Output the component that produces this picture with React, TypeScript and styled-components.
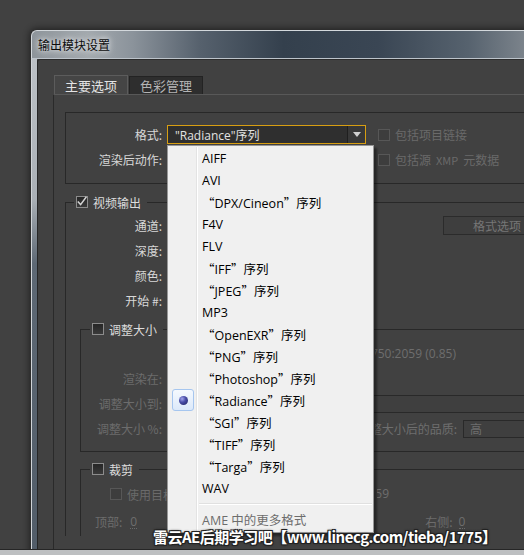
import React from "react";
import styled, { createGlobalStyle } from "styled-components";

const GlobalStyle = createGlobalStyle`
  html, body { margin: 0; padding: 0; background: #414141; }
  body { overflow: hidden; }
  * { box-sizing: border-box; }
`;

const LATIN = `"Open Sans", "Noto Sans CJK SC", sans-serif`;
const CJK = `"Noto Sans CJK SC", sans-serif`;

const Screen = styled.div`
  position: relative;
  width: 524px;
  height: 555px;
  overflow: hidden;
  display: flex;
  flex-direction: column;
  background: #414141;
  font-family: ${LATIN};
  font-size: 12px;
`;

const Desktop = styled.div`
  flex: 1;
  min-height: 0;
  overflow: hidden;
  padding: 30px 0 0 31px;
`;

const Taskbar = styled.div`
  height: 6px;
  flex-shrink: 0;
  border-top: 1px solid #262626;
  background: #bdbfc1;
`;

const Window = styled.div`
  width: 560px;
  height: 560px;
  display: flex;
  flex-direction: column;
  border-top-left-radius: 6px;
  box-shadow: 0 0 6px 2px rgba(0, 0, 0, 0.45);
`;

const TitleBar = styled.div`
  height: 29px;
  flex-shrink: 0;
  display: flex;
  align-items: center;
  padding: 0 0 1px 6px;
  border: 1px solid #d3d8dc;
  border-right: none;
  border-bottom-color: #bcc3ca;
  border-top-left-radius: 6px;
  background: linear-gradient(
    90deg,
    #8d949a 0%,
    #a3a9ae 10%,
    #8b939b 18%,
    #56616d 30%,
    #34404d 45%,
    #3a4654 62%,
    #56626e 78%,
    #7b838b 88%,
    #8c9399 100%
  );
`;

const Title = styled.span`
  font-family: ${CJK};
  font-size: 12px;
  color: #0c0c0c;
  text-shadow: 0 0 5px rgba(255, 255, 255, 0.9), 0 0 10px rgba(255, 255, 255, 0.6);
`;

const WindowBody = styled.div`
  flex: 1;
  min-height: 0;
  display: flex;
`;

const SideFrame = styled.div`
  width: 6px;
  flex-shrink: 0;
  border-left: 1px solid #d0d4d8;
  background: linear-gradient(180deg, #bcc1c6 0, #aab0b6 140px, #5d6874 205px, #505b67 100%);
`;

const Client = styled.div`
  flex: 1;
  display: flex;
  flex-direction: column;
  background: #414141;
  border-left: 1px solid #262626;
  border-top: 1px solid #2c2c2c;
  border-top-left-radius: 3px;
  padding: 15px 0 0 15px;
`;

const TabStrip = styled.div`
  display: flex;
  align-items: flex-end;
  height: 19px;
  padding-left: 1px;
`;

const Tab = styled.div<{ $active?: boolean }>`
  width: 74px;
  height: ${(p) => (p.$active ? 19 : 18)}px;
  margin-left: ${(p) => (p.$active ? 0 : 1)}px;
  display: flex;
  align-items: center;
  justify-content: center;
  font-family: ${CJK};
  font-size: 13px;
  color: ${(p) => (p.$active ? "#e4e4e4" : "#b4b4b4")};
  background: ${(p) => (p.$active ? "#454545" : "#2e2e2e")};
  border: 1px solid ${(p) => (p.$active ? "#5c5c5c" : "#232323")};
  border-bottom: none;
`;

const TabPanel = styled.div`
  flex: 1;
  border-top: 1px solid #585858;
  border-left: 1px solid #2a2a2a;
  padding: 17px 0 0 11px;
`;

const FormatBox = styled.div`
  border: 1px solid #282828;
  border-right: none;
  padding: 9px 0 11px;
  display: grid;
  grid-template-columns: 96px 199px auto;
  grid-auto-rows: 25px;
  column-gap: 5px;
  align-items: center;
`;

const Label = styled.span<{ $dim?: boolean; $w?: number }>`
  display: inline-block;
  flex-shrink: 0;
  width: ${(p) => (p.$w ? `${p.$w}px` : "auto")};
  line-height: 14px;
  text-align: right;
  white-space: nowrap;
  font-family: ${CJK};
  font-size: 12px;
  color: ${(p) => (p.$dim ? "#6c6c6c" : "#d8d8d8")};
`;

const Select = styled.div<{ $focus?: boolean }>`
  height: 19px;
  display: flex;
  align-items: stretch;
  border: 1px solid ${(p) => (p.$focus ? "#d79e12" : "#2a2a2a")};
  background: #2f2f2f;
`;

const SelectText = styled.span`
  flex: 1;
  display: flex;
  align-items: center;
  padding-left: 7px;
  color: #e2e2e2;
  font-family: ${LATIN};
  font-size: 12px;
  white-space: nowrap;
`;

const SelectArrow = styled.span`
  width: 18px;
  margin-left: auto;
  display: flex;
  align-items: center;
  justify-content: center;
  border-left: 1px solid #1f1f1f;
  background: #383838;
`;

const CheckOption = styled.label<{ $dim?: boolean; $ml?: number }>`
  display: flex;
  align-items: center;
  gap: 5px;
  margin-left: ${(p) => p.$ml ?? 0}px;
  white-space: nowrap;
  font-family: ${CJK};
  font-size: 12px;
  color: ${(p) => (p.$dim ? "#6a6a6a" : "#dcdcdc")};
`;

const Box = styled.span<{ $dim?: boolean }>`
  width: 12px;
  height: 12px;
  flex-shrink: 0;
  display: flex;
  align-items: center;
  justify-content: center;
  border: 1px solid ${(p) => (p.$dim ? "#575757" : "#8c8c8c")};
  background: ${(p) => (p.$dim ? "#3d3d3d" : "linear-gradient(#262626, #3a3a3a)")};
  overflow: visible;
`;

const Check = ({ checked, dim }: { checked?: boolean; dim?: boolean }) => (
  <Box $dim={dim}>
    {checked && (
      <svg width="12" height="12" viewBox="0 0 12 12" style={{ overflow: "visible" }}>
        <path d="M1.8 5.6 L4.6 8.6 L10.4 0.8" stroke="#d4d4d4" strokeWidth="1.5" fill="none" />
      </svg>
    )}
  </Box>
);

const Group = styled.fieldset<{ $mt: number; $ml?: number; $pt?: number; $pb?: number; $bottom?: boolean }>`
  margin: ${(p) => p.$mt}px 0 0 ${(p) => p.$ml ?? 0}px;
  padding: ${(p) => p.$pt ?? 0}px 0 ${(p) => p.$pb ?? 0}px 0;
  min-width: 0;
  border: 1px solid #282828;
  border-right: none;
  border-bottom: ${(p) => (p.$bottom ? "1px solid #282828" : "none")};
`;

const Legend = styled.legend<{ $ml: number }>`
  margin-left: ${(p) => p.$ml}px;
  padding: 0 6px 0 2px;
  height: 16px;
  display: flex;
  align-items: center;
  gap: 5px;
  font-family: ${CJK};
  font-size: 12px;
  color: #dcdcdc;
`;

const Row = styled.div<{ $h?: number }>`
  display: flex;
  align-items: center;
  height: ${(p) => p.$h ?? 25}px;
`;

const Button = styled.div<{ $ml: number }>`
  margin-left: ${(p) => p.$ml}px;
  width: 108px;
  height: 19px;
  flex-shrink: 0;
  display: flex;
  align-items: center;
  justify-content: center;
  border: 1px solid #2b2b2b;
  background: #3e3e3e;
  font-family: ${CJK};
  font-size: 12px;
  color: #767676;
`;

/* a window onto text whose left part is covered by the open menu */
const Clip = styled.span<{ $ml: number; $w: number }>`
  margin-left: ${(p) => p.$ml}px;
  width: ${(p) => p.$w}px;
  flex-shrink: 0;
  overflow: hidden;
  display: flex;
  justify-content: flex-end;
  line-height: 14px;
  white-space: nowrap;
  font-family: ${LATIN};
  font-size: 12px;
  color: #6e6e6e;
`;

const ClipLeft = styled.span<{ $w: number }>`
  width: ${(p) => p.$w}px;
  flex-shrink: 0;
  overflow: hidden;
  white-space: nowrap;
`;

const Field = styled.div<{ $ml: number; $w: number }>`
  margin-left: ${(p) => p.$ml}px;
  width: ${(p) => p.$w}px;
  height: 18px;
  flex-shrink: 0;
  display: flex;
  align-items: center;
  padding-left: 6px;
  border: 1px solid #292929;
  background: #3f3f3f;
  font-family: ${CJK};
  font-size: 12px;
  color: #6e6e6e;
`;

const Value = styled.span<{ $ml: number }>`
  margin-left: ${(p) => p.$ml}px;
  font-family: ${LATIN};
  font-size: 12px;
  color: #6e6e6e;
  line-height: 13px;
  border-bottom: 1px dotted #6a6a6a;
`;

/* ---------- dropdown menu ---------- */

const Menu = styled.div`
  position: absolute;
  left: 167px;
  top: 145px;
  width: 207px;
  height: 388px;
  padding: 1px 1px 2px;
  background: #f0f0f0;
  border: 1px solid #979797;
  box-shadow: 3px 3px 2px rgba(0, 0, 0, 0.4);
  font-family: ${LATIN};
  font-size: 12.5px;
  color: #000;
  &::before {
    content: "";
    position: absolute;
    left: 28px;
    top: 1px;
    bottom: 1px;
    width: 1px;
    background: #e3e3e3;
    box-shadow: 1px 0 0 #ffffff;
  }
`;

const Item = styled.div<{ $muted?: boolean }>`
  position: relative;
  height: 22px;
  display: flex;
  align-items: center;
  white-space: nowrap;
  color: ${(p) => (p.$muted ? "#6d6d6d" : "#000")};
`;

const Gutter = styled.span`
  width: 33px;
  height: 22px;
  flex-shrink: 0;
  display: flex;
  align-items: center;
  padding-left: 3px;
`;

const Indicator = styled.span`
  width: 22px;
  height: 22px;
  display: flex;
  align-items: center;
  justify-content: center;
  border: 1px solid #a6c6ef;
  border-radius: 3px;
  background: linear-gradient(#f5f9fe, #dce9fa);
`;

const Dot = styled.span`
  width: 9px;
  height: 9px;
  border-radius: 50%;
  background: radial-gradient(circle at 35% 32%, #a3a6ee 0, #4a4ea8 40%, #1d1f5c 100%);
`;

const Q = styled.span`
  font-family: ${CJK};
`;

const Separator = styled.div`
  margin: 4px 0 3px 30px;
  height: 2px;
  border-top: 1px solid #e0e0e0;
  border-bottom: 1px solid #ffffff;
`;

const Watermark = styled.div`
  position: absolute;
  left: 153px;
  top: 529px;
  line-height: 15px;
  font-family: ${CJK};
  font-weight: 700;
  font-size: 15px;
  letter-spacing: -0.5px;
  color: #ffffff;
  white-space: nowrap;
  text-shadow: 1px 1px 0 #222, -1px -1px 0 #222, 1px -1px 0 #222, -1px 1px 0 #222, 0 0 3px #000;
`;

const formats: { name: string; seq?: boolean; selected?: boolean }[] = [
  { name: "AIFF" },
  { name: "AVI" },
  { name: "DPX/Cineon", seq: true },
  { name: "F4V" },
  { name: "FLV" },
  { name: "IFF", seq: true },
  { name: "JPEG", seq: true },
  { name: "MP3" },
  { name: "OpenEXR", seq: true },
  { name: "PNG", seq: true },
  { name: "Photoshop", seq: true },
  { name: "Radiance", seq: true, selected: true },
  { name: "SGI", seq: true },
  { name: "TIFF", seq: true },
  { name: "Targa", seq: true },
  { name: "WAV" },
];

const DownArrow = () => (
  <svg width="8" height="5" viewBox="0 0 8 5">
    <polygon points="0,0 8,0 4,5" fill="#d0d0d0" />
  </svg>
);

export default function App() {
  return (
    <>
      <GlobalStyle />
      <Screen>
        <Desktop>
          <Window>
            <TitleBar>
              <Title>输出模块设置</Title>
            </TitleBar>
            <WindowBody>
              <SideFrame />
              <Client>
                <TabStrip>
                  <Tab $active>主要选项</Tab>
                  <Tab>色彩管理</Tab>
                </TabStrip>
                <TabPanel>
                  <FormatBox>
                    <Label>格式:</Label>
                    <Select $focus>
                      <SelectText>"Radiance"序列</SelectText>
                      <SelectArrow>
                        <DownArrow />
                      </SelectArrow>
                    </Select>
                    <CheckOption $dim $ml={7}>
                      <Check dim />
                      包括项目链接
                    </CheckOption>
                    <Label>渲染后动作:</Label>
                    <Select>
                      <SelectArrow>
                        <DownArrow />
                      </SelectArrow>
                    </Select>
                    <CheckOption $dim $ml={7}>
                      <Check dim />
                      包括源 <span style={{ fontSize: 11 }}>XMP</span> 元数据
                    </CheckOption>
                  </FormatBox>

                  <Group $mt={10} $pt={3}>
                    <Legend $ml={8}>
                      <Check checked />
                      视频输出
                    </Legend>
                    <Row>
                      <Label $w={96}>通道:</Label>
                      <Button $ml={281}>格式选项</Button>
                    </Row>
                    <Row>
                      <Label $w={96}>深度:</Label>
                    </Row>
                    <Row>
                      <Label $w={96}>颜色:</Label>
                    </Row>
                    <Row>
                      <Label $w={96}>开始 #:</Label>
                    </Row>

                    <Group $mt={8} $ml={14} $pt={4} $pb={10} $bottom>
                      <Legend $ml={9}>
                        <Check />
                        调整大小
                      </Legend>
                      <Row>
                        <Label $w={81} />
                        <Clip $ml={213} $w={81}>
                          1750:2059 (0.85)
                        </Clip>
                      </Row>
                      <Row>
                        <Label $w={81} $dim>
                          渲染在:
                        </Label>
                      </Row>
                      <Row>
                        <Label $w={81} $dim>
                          调整大小到:
                        </Label>
                        <Field $ml={5} $w={420} />
                      </Row>
                      <Row>
                        <Label $w={81} $dim>
                          调整大小 %:
                        </Label>
                        <Clip $ml={213} $w={82} style={{ fontFamily: CJK }}>
                          调整大小后的品质:
                        </Clip>
                        <Field $ml={6} $w={90}>
                          高
                        </Field>
                      </Row>
                    </Group>

                    <Group $mt={9} $ml={14} $pt={3}>
                      <Legend $ml={9}>
                        <Check />
                        裁剪
                      </Legend>
                      <Row $h={28}>
                        <CheckOption $dim $ml={29}>
                          <Check dim />
                          <ClipLeft $w={40}>使用目标</ClipLeft>
                        </CheckOption>
                        <Clip $ml={210} $w={12}>
                          2059
                        </Clip>
                      </Row>
                      <Row $h={28}>
                        <Label $dim style={{ marginLeft: 14 }}>
                          顶部:
                        </Label>
                        <Value $ml={8}>0</Value>
                        <Label $dim style={{ marginLeft: 288 }}>
                          右侧:
                        </Label>
                        <Value $ml={6}>0</Value>
                      </Row>
                    </Group>
                  </Group>
                </TabPanel>
              </Client>
            </WindowBody>
          </Window>
        </Desktop>
        <Taskbar />

        <Menu>
          {formats.map((f) => (
            <Item key={f.name}>
              <Gutter>
                {f.selected && (
                  <Indicator>
                    <Dot />
                  </Indicator>
                )}
              </Gutter>
              {f.seq ? (
                <span>
                  <Q>“</Q>
                  {f.name}
                  <Q>”序列</Q>
                </span>
              ) : (
                <span>{f.name}</span>
              )}
            </Item>
          ))}
          <Separator />
          <Item $muted>
            <Gutter />
            <span>AME 中的更多格式</span>
          </Item>
        </Menu>

        <Watermark>雷云AE后期学习吧【www.linecg.com/tieba/1775】</Watermark>
      </Screen>
    </>
  );
}
